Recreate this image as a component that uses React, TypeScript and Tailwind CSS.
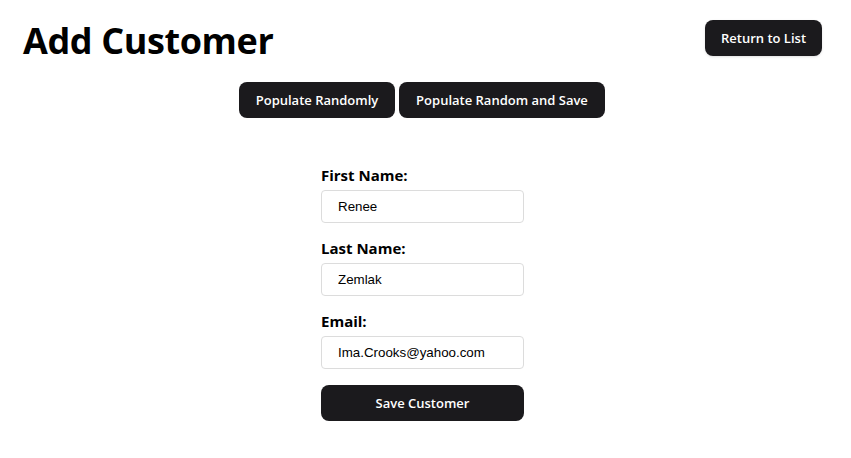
const ui = "font-['Open_Sans','Noto_Sans',sans-serif]";
const btn = "h-[36px] pt-[2px] rounded-[8px] bg-[#1b1a1d] text-white text-[13px] font-semibold";

function Field({ label, value }: { label: string; value: string }) {
  return (
    <div className="flex flex-col">
      <label className="text-[15px] leading-[24px] font-bold text-black mb-[3px]">{label}</label>
      <input
        readOnly
        value={value}
        className="w-[203px] h-[33px] border border-[#dcdcdc] rounded-[4px] bg-white pl-[16px] text-[13.333px] text-black font-['Liberation_Sans',Arial,sans-serif] outline-none mb-[13px]"
      />
    </div>
  );
}

export default function App() {
  return (
    <div className={`min-h-[458px] bg-white text-black ${ui}`}>
      <div className="flex items-start justify-between pl-[23px] pr-[29px] pt-[20px]">
        <h1 className="text-[36px] leading-[42px] font-bold tracking-[-0.4px]">Add Customer</h1>
        <button className={`${btn} w-[117px] shadow-sm`}>Return to List</button>
      </div>
      <div className="flex justify-center gap-[4px] mt-[20px] pr-[7px]">
        <button className={`${btn} w-[156px]`}>Populate Randomly</button>
        <button className={`${btn} w-[206px]`}>Populate Random and Save</button>
      </div>
      <div className="flex justify-center mt-[45px] pr-[6px]">
        <form className="flex flex-col">
          <Field label="First Name:" value="Renee" />
          <Field label="Last Name:" value="Zemlak" />
          <Field label="Email:" value="Ima.Crooks@yahoo.com" />
          <button type="button" className={`${btn} mt-[3px] w-[203px]`}>
            Save Customer
          </button>
        </form>
      </div>
    </div>
  );
}
